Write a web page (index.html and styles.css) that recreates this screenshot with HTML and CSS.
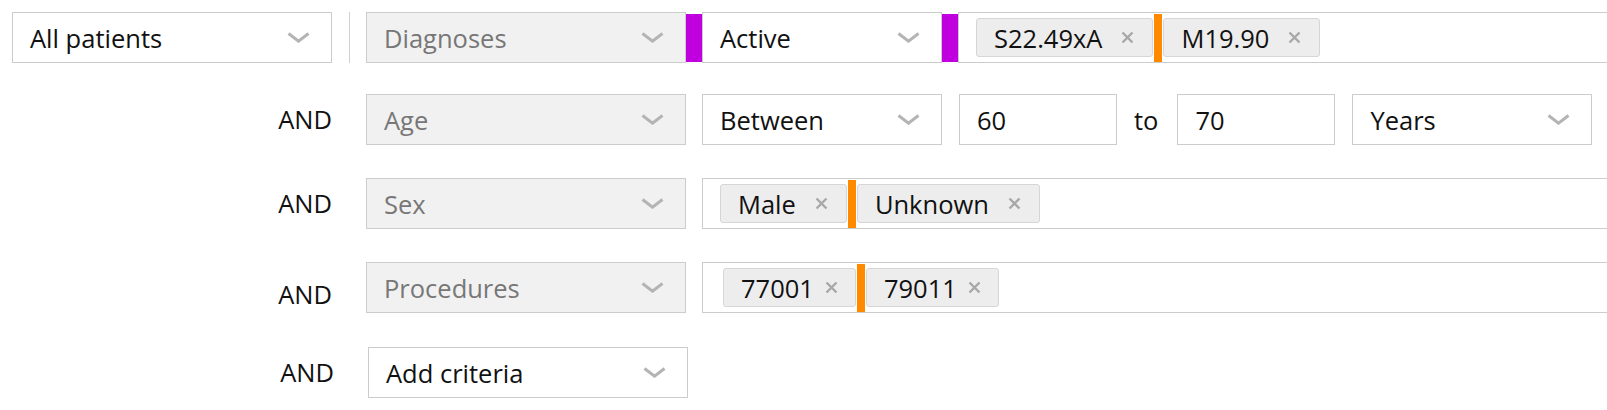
FILE: index.html
```html
<!DOCTYPE html>
<html lang="en">
<head>
<meta charset="utf-8">
<title>Cohort builder</title>
<link rel="stylesheet" href="styles.css">
</head>
<body>
<div class="builder">
  <div class="row row--first">
    <div class="lead">
      <div class="select select--lead">
        <span>All patients</span>
        <svg class="chev" viewBox="0 0 23 11" width="23" height="11"><path d="M1.5 1.5 L11.5 9.2 L21.5 1.5"/></svg>
      </div>
    </div>
    <div class="divider divider--visible"></div>
    <div class="select select--criteria select--muted">
      <span>Diagnoses</span>
      <svg class="chev" viewBox="0 0 23 11" width="23" height="11"><path d="M1.5 1.5 L11.5 9.2 L21.5 1.5"/></svg>
    </div>
    <div class="marker marker--purple"></div>
    <div class="select select--op">
      <span>Active</span>
      <svg class="chev" viewBox="0 0 23 11" width="23" height="11"><path d="M1.5 1.5 L11.5 9.2 L21.5 1.5"/></svg>
    </div>
    <div class="marker marker--purple"></div>
    <div class="multi">
      <span class="tag"><span>S22.49xA</span><svg class="x" viewBox="0 0 13 13" width="13" height="13"><path d="M1.5 1.5 L11.5 11.5 M11.5 1.5 L1.5 11.5"/></svg></span>
      <span class="drop"></span>
      <span class="tag"><span>M19.90</span><svg class="x" viewBox="0 0 13 13" width="13" height="13"><path d="M1.5 1.5 L11.5 11.5 M11.5 1.5 L1.5 11.5"/></svg></span>
    </div>
  </div>

  <div class="row">
    <div class="lead"><span class="and">AND</span></div>
    <div class="divider"></div>
    <div class="select select--criteria select--muted">
      <span>Age</span>
      <svg class="chev" viewBox="0 0 23 11" width="23" height="11"><path d="M1.5 1.5 L11.5 9.2 L21.5 1.5"/></svg>
    </div>
    <div class="body">
      <div class="select select--op">
        <span>Between</span>
        <svg class="chev" viewBox="0 0 23 11" width="23" height="11"><path d="M1.5 1.5 L11.5 9.2 L21.5 1.5"/></svg>
      </div>
      <div class="field">60</div>
      <span class="to">to</span>
      <div class="field field--second">70</div>
      <div class="select select--op">
        <span>Years</span>
        <svg class="chev" viewBox="0 0 23 11" width="23" height="11"><path d="M1.5 1.5 L11.5 9.2 L21.5 1.5"/></svg>
      </div>
    </div>
  </div>

  <div class="row">
    <div class="lead"><span class="and">AND</span></div>
    <div class="divider"></div>
    <div class="select select--criteria select--muted">
      <span>Sex</span>
      <svg class="chev" viewBox="0 0 23 11" width="23" height="11"><path d="M1.5 1.5 L11.5 9.2 L21.5 1.5"/></svg>
    </div>
    <div class="body">
      <div class="multi">
        <span class="tag"><span>Male</span><svg class="x" viewBox="0 0 13 13" width="13" height="13"><path d="M1.5 1.5 L11.5 11.5 M11.5 1.5 L1.5 11.5"/></svg></span>
        <span class="drop"></span>
        <span class="tag"><span>Unknown</span><svg class="x" viewBox="0 0 13 13" width="13" height="13"><path d="M1.5 1.5 L11.5 11.5 M11.5 1.5 L1.5 11.5"/></svg></span>
      </div>
    </div>
  </div>

  <div class="row">
    <div class="lead"><span class="and and--low">AND</span></div>
    <div class="divider"></div>
    <div class="select select--criteria select--muted">
      <span>Procedures</span>
      <svg class="chev" viewBox="0 0 23 11" width="23" height="11"><path d="M1.5 1.5 L11.5 9.2 L21.5 1.5"/></svg>
    </div>
    <div class="body">
      <div class="multi multi--wide">
        <span class="tag tag--tight"><span>77001</span><svg class="x" viewBox="0 0 13 13" width="13" height="13"><path d="M1.5 1.5 L11.5 11.5 M11.5 1.5 L1.5 11.5"/></svg></span>
        <span class="drop"></span>
        <span class="tag tag--tight"><span>79011</span><svg class="x" viewBox="0 0 13 13" width="13" height="13"><path d="M1.5 1.5 L11.5 11.5 M11.5 1.5 L1.5 11.5"/></svg></span>
      </div>
    </div>
  </div>

  <div class="row row--last">
    <div class="lead"><span class="and">AND</span></div>
    <div class="divider"></div>
    <div class="select select--criteria">
      <span>Add criteria</span>
      <svg class="chev" viewBox="0 0 23 11" width="23" height="11"><path d="M1.5 1.5 L11.5 9.2 L21.5 1.5"/></svg>
    </div>
  </div>
</div>
</body>
</html>
```

FILE: styles.css
```css
html, body {
  margin: 0;
  padding: 0;
  background: #ffffff;
  overflow: hidden;
}

body {
  font-family: "Open Sans", "Noto Sans", sans-serif;
  font-size: 25.5px;
  color: #111111;
}

.builder {
  width: 1680px;
  padding: 12px 0 0 12px;
  display: flex;
  flex-direction: column;
  gap: 33px;
}

.row {
  display: flex;
  align-items: center;
  height: 51px;
}

.row--first {
  margin-bottom: -2px;
}

.row--last {
  margin-top: 1px;
  padding-left: 2px;
}

.lead {
  width: 320px;
  flex: none;
  display: flex;
  justify-content: flex-end;
  align-items: center;
  height: 100%;
}

.and {
  line-height: 1;
}

.and--low {
  padding-top: 14px;
}

.divider {
  width: 1px;
  height: 51px;
  margin: 0 16px 0 17px;
  flex: none;
}

.divider--visible {
  background: #d0d0d0;
}

.select {
  box-sizing: border-box;
  height: 51px;
  border: 1px solid #cccccc;
  background: #ffffff;
  display: flex;
  align-items: center;
  justify-content: space-between;
  padding: 0 21px 0 17px;
  flex: none;
  white-space: nowrap;
}

.select--lead {
  width: 320px;
}

.select--criteria {
  width: 320px;
}

.select--op {
  width: 240px;
}

.select--muted {
  background: #f1f1f1;
  color: #777777;
}

.chev {
  flex: none;
  display: block;
}

.chev path {
  fill: none;
  stroke: #b4b4b4;
  stroke-width: 3;
}

.marker {
  width: 16px;
  height: 48px;
  flex: none;
}

.marker--purple {
  background: #c000df;
}

.body {
  flex: 1;
  display: flex;
  align-items: center;
  gap: 17px;
  margin-left: 16px;
  height: 100%;
}

.field {
  box-sizing: border-box;
  width: 158px;
  height: 51px;
  border: 1px solid #cccccc;
  display: flex;
  align-items: center;
  padding-left: 17px;
  flex: none;
}

.field--second {
  margin-left: 2px;
}

.to {
  flex: none;
}

.multi {
  flex: 1;
  box-sizing: border-box;
  height: 51px;
  border: 1px solid #cccccc;
  background: #ffffff;
  display: flex;
  align-items: center;
  padding: 0 17px;
}

.multi--wide {
  padding-left: 20px;
}

.tag {
  box-sizing: border-box;
  height: 39px;
  display: inline-flex;
  align-items: center;
  gap: 19px;
  padding: 0 18px 0 17px;
  background: #ededed;
  border: 1px solid #d6d6d6;
  border-radius: 3px;
  white-space: nowrap;
  flex: none;
}

.tag--tight {
  gap: 11px;
  padding-right: 17px;
}

.x {
  display: block;
  flex: none;
}

.x path {
  fill: none;
  stroke: #a8a8a8;
  stroke-width: 2.4;
}

.drop {
  width: 8px;
  height: 48px;
  background: #ff8a00;
  flex: none;
  margin: 0 1px 0 1px;
}
```
